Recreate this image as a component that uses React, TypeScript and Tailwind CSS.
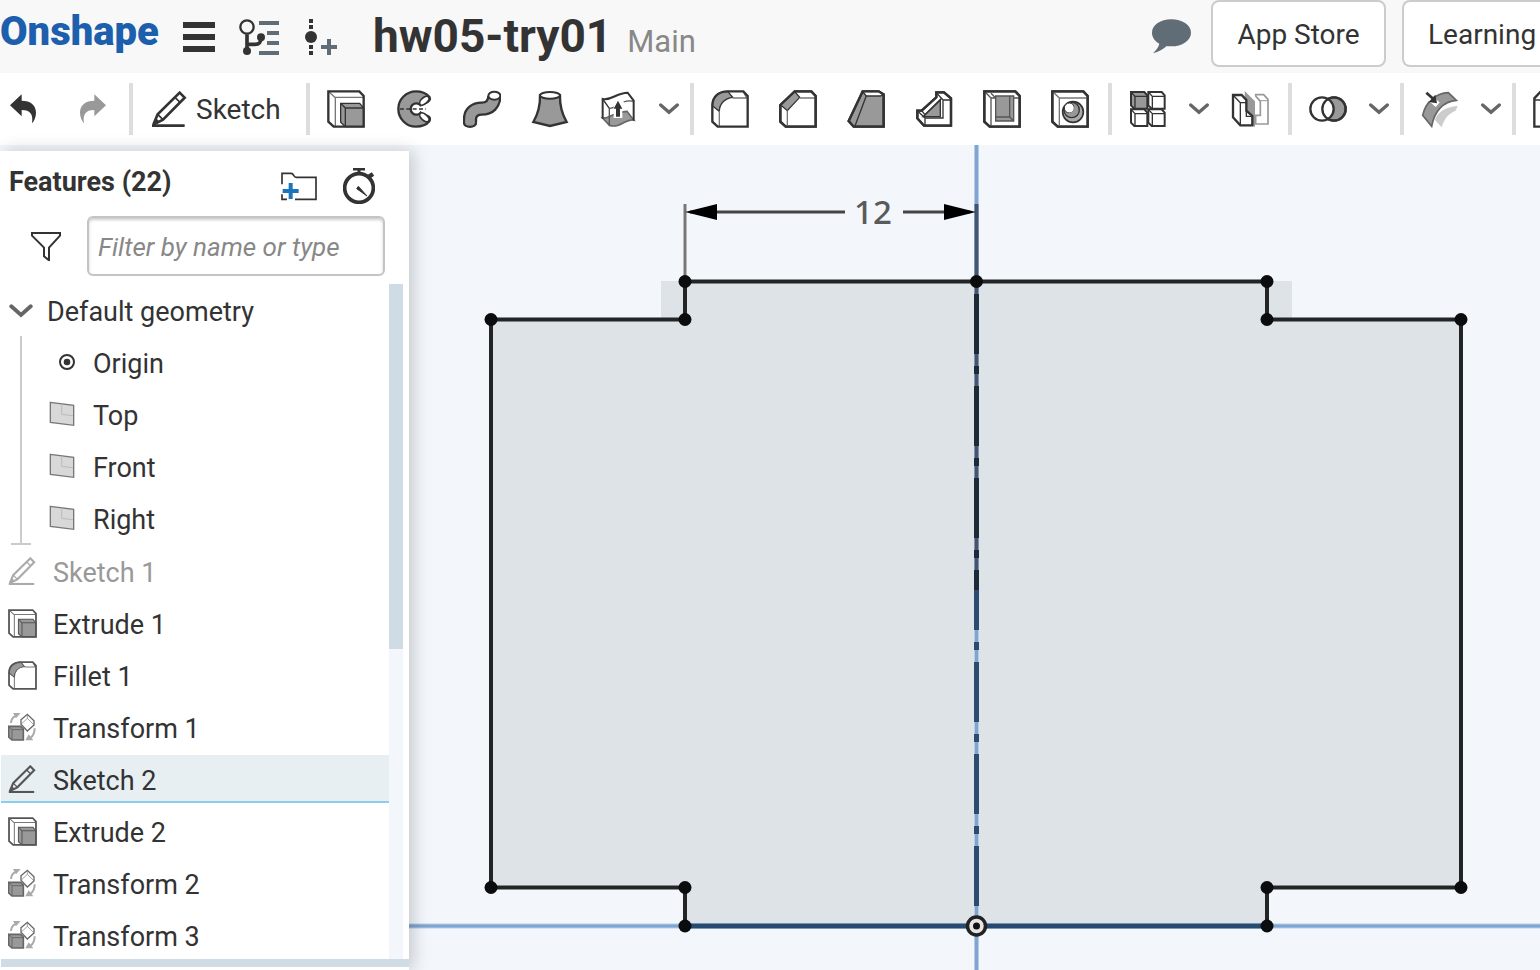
import type { ReactNode } from "react";

const INK = "#333333";
const MID = "#999999";

function Icon({ children, className = "size-[38px]", box = "0 0 114 114" }: { children: ReactNode; className?: string; box?: string }) {
  return (
    <svg viewBox={box} className={`shrink-0 ${className}`} fill="none" stroke={INK} strokeWidth={7} aria-hidden="true">
      {children}
    </svg>
  );
}

const block = "M4 4H97L110 18V110H20L4 95Z";

const Pencil = ({ className = "size-[36px]", color = INK, width = 8 }: { className?: string; color?: string; width?: number }) => (
  <Icon className={className} box="0 0 108 108">
    <g stroke={color} strokeWidth={width}>
      <path d="M7 101L20 70L86 5L101 20L36 86L7 101" />
      <path d="M20 70L36 86M72 19L87 34" strokeWidth={5} />
      <path d="M4 104L14 80L27 93Z" fill={color} stroke="none" />
      <path d="M3 104H101" />
    </g>
  </Icon>
);

const Extrude = ({ className, color = INK }: { className?: string; color?: string }) => (
  <Icon className={className}>
    <path d={block} fill="#fff" stroke="none" />
    <path d="M4 4L25 23M25 22V108M25 22H108" stroke="#777" strokeWidth={4} />
    <path d="M41 40H98L110 54V110H55L41 97Z" fill={MID} stroke={color} strokeWidth={4} />
    <path d="M41 40L55 54H110M55 54V110" stroke={color} strokeWidth={4} />
    <path d={block} stroke={color} />
  </Icon>
);

const Revolve = () => (
  <Icon>
    <path d="M103 20C93 9 80 4 63 4A53 53 0 0 0 63 110C80 110 94 105 103 94C108 84 102 76 88 76L77 68A17 17 0 1 1 77 46L88 40C102 37 108 28 103 20Z" fill={MID} />
    <ellipse cx="88" cy="32" rx="17" ry="9" transform="rotate(-42 88 32)" fill="#fff" strokeWidth={5} />
    <ellipse cx="88" cy="82" rx="17" ry="9" transform="rotate(42 88 82)" fill="#fff" strokeWidth={5} />
    <path d="M15 57H93" strokeDasharray="12 7" strokeWidth={5} />
  </Icon>
);

const Sweep = () => (
  <Icon>
    <path d="M21 96V88C21 66 36 56 56 56C80 56 94 42 94 18" strokeWidth={43} />
    <ellipse cx="21" cy="99" rx="21.5" ry="15" fill={INK} stroke="none" />
    <path d="M21 99V88C21 66 36 56 56 56C80 56 94 42 94 18" stroke={MID} strokeWidth={29} />
    <ellipse cx="21" cy="98" rx="14.5" ry="9" fill={MID} stroke="none" />
    <ellipse cx="94" cy="17" rx="18" ry="12" fill="#fff" strokeWidth={6} />
  </Icon>
);

const Loft = () => (
  <Icon>
    <path d="M27 16C28 50 20 74 7 96L57 108L107 96C94 74 86 50 87 16Z" fill={MID} />
    <ellipse cx="57" cy="16" rx="30" ry="10" fill="#fff" strokeWidth={6} />
  </Icon>
);

const Thicken = () => (
  <Icon>
    <path d="M11 27C40 32 52 8 86 8L104 32V90C80 84 66 116 31 106L11 84Z" fill="#fff" stroke="none" />
    <path d="M11 84C30 88 42 66 84 64L104 90C80 84 66 116 31 106Z" fill={MID} stroke="#666" strokeWidth={5} />
    <path d="M31 55V106M31 55C44 56 52 44 62 38M74 36C84 32 94 32 104 34" stroke="#555" strokeWidth={4} />
    <path d="M11 27L31 55" strokeWidth={4} />
    <path d="M57 30V84" stroke="#fff" strokeWidth={26} />
    <path d="M57 32L44 56H51V80H63V56H70Z" fill={INK} stroke="none" />
    <path d="M11 86V27C40 32 52 8 86 8L104 32V92" strokeWidth={6} />
  </Icon>
);

const Fillet = ({ className, color = INK }: { className?: string; color?: string }) => (
  <Icon className={className}>
    <path d="M4 47C4 18 25 4 50 4H97L110 18V110H20L4 95Z" fill="#fff" stroke="none" />
    <path d="M4 47C4 18 25 4 50 4L65 22C42 25 25 40 25 64Z" fill={MID} stroke={color} strokeWidth={4} />
    <path d="M25 108V62M65 24H108M97 4L106 22" stroke="#777" strokeWidth={4} />
    <path d="M4 47C4 18 25 4 50 4H97L110 18V110H20L4 95Z" stroke={color} />
  </Icon>
);

const Chamfer = () => (
  <Icon>
    <path d="M4 45L47 4H97L110 18V110H20L4 95Z" fill="#fff" />
    <path d="M5 45L47 5L62 22L25 62Z" fill={MID} strokeWidth={4} />
    <path d="M25 108V62M62 24H108" stroke="#777" strokeWidth={4} />
    <path d="M4 45L47 4H97L110 18V110H20L4 95Z" />
  </Icon>
);

const Draft = () => (
  <Icon>
    <path d="M47 4H95L110 13V110H20L5 93Z" fill={MID} />
    <path d="M47 5H95L108 14L100 18H58Z" fill="#fff" strokeWidth={4} />
    <path d="M58 17L24 108" strokeWidth={4} />
    <path d="M47 4H95L110 13V110H20L5 93Z" />
  </Icon>
);

const Rib = () => (
  <Icon>
    <path d="M64 7H87L108 25V107H27L7 85V62H20L64 22Z" fill="#fff" />
    <path d="M24 80L76 30V80Z" fill={MID} strokeWidth={4} />
    <path d="M64 8L84 30H108M84 30V84H30V105M7 62L30 84M20 62L30 74L78 26" strokeWidth={4} />
    <path d="M64 7H87L108 25V107H27L7 85V62H20L64 22Z" />
  </Icon>
);

const Shell = () => (
  <Icon>
    <path d={block} fill="#fff" />
    <path d="M38 18H92V93H38Z" fill={MID} stroke="#555" strokeWidth={4} />
    <path d="M38 81H80L92 93M80 81V18M4 4L24 24V108M24 24H38M92 24H108M24 10L38 24" stroke="#555" strokeWidth={4} />
    <path d={block} />
  </Icon>
);

const Hole = () => (
  <Icon>
    <path d={block} fill="#fff" />
    <path d="M4 4L25 24H108M25 24V108" stroke="#777" strokeWidth={4} />
    <circle cx="66" cy="66" r="31" fill="#aaa" strokeWidth={5} />
    <circle cx="62" cy="60" r="23" fill={MID} strokeWidth={4} />
    <circle cx="55" cy="54" r="15" fill="#fff" strokeWidth={3} />
    <path d="M70 46A17 17 0 0 1 46 69C62 72 72 60 70 46Z" fill={MID} stroke="none" />
    <path d={block} />
  </Icon>
);

const Pattern = () => (
  <Icon>
    {[[6, 6], [58, 6], [6, 58], [58, 58]].map(([x, y], i) => (
      <g key={i} transform={`translate(${x} ${y})`}>
        <path d="M0 0H40L49 10V50H10L0 40Z" fill={i === 0 ? MID : "#fff"} strokeWidth={6} />
        <path d="M0 0L12 13H48M12 13V50" strokeWidth={4} />
      </g>
    ))}
  </Icon>
);

const Mirror = () => (
  <Icon>
    <path d="M41 3L72 34V112L41 80Z" fill={MID} stroke="none" />
    <path d="M74 14H98L111 28V102H74V76H88V34L74 18Z" fill="#fff" stroke="#999" strokeWidth={5} />
    <path d="M98 14L111 28M76 20L88 32H111" stroke="#999" strokeWidth={3} />
    <path d="M6 15H32L46 30V62L64 78V106H28L6 82Z" fill="#fff" />
    <path d="M6 15L28 38V103M28 38H46M46 60V79H64" strokeWidth={4} />
  </Icon>
);

const BooleanOp = () => (
  <Icon>
    <circle cx="75" cy="57" r="35" fill={MID} />
    <circle cx="39" cy="57" r="35" fill="#fff" />
    <circle cx="75" cy="57" r="35" />
  </Icon>
);

const ModifyFace = () => (
  <Icon>
    <path d="M42 90C48 68 74 50 110 48L104 62C86 68 70 84 62 112Z" fill="#ccc" stroke="none" />
    <path d="M5 76C14 36 44 10 82 8L106 31C68 34 40 62 32 109Z" fill={MID} stroke="#666" strokeWidth={5} />
    <path d="M10 8L50 44" stroke="#fff" strokeWidth={18} />
    <path d="M16 8L38 28" strokeWidth={8} />
    <path d="M48 40L23 36L43 14Z" fill={INK} stroke="none" />
  </Icon>
);

const NextTool = () => (
  <Icon>
    <path d="M4 110V25L22 6H110V110Z" fill="#fff" />
    <path d="M4 30H80L108 8M80 30V108" strokeWidth={4} />
  </Icon>
);

const Undo = ({ flip = false }: { flip?: boolean }) => (
  <Icon className="h-[30px] w-[26px]" box="0 0 78 90">
    <path
      transform={flip ? "translate(78 0) scale(-1 1)" : undefined}
      d="M0 34L35 1V20C62 20 78 34 78 56C78 70 72 82 66 88C70 62 62 48 35 48V67Z"
      fill={flip ? MID : INK}
      stroke="none"
    />
  </Icon>
);

const Chevron = ({ className = "h-3 w-5" }: { className?: string }) => (
  <Icon className={className} box="0 0 60 36">
    <path d="M5 6L30 28L55 6" stroke="#666" strokeWidth={10} strokeLinecap="round" />
  </Icon>
);

const Transform = () => (
  <Icon className="size-[28px]" box="0 0 84 84">
    <path d="M2 40H38L46 48V81H12L2 72Z" fill={MID} stroke="#666" strokeWidth={5} />
    <path d="M2 40L12 50H46M12 50V81" stroke="#666" strokeWidth={3} />
    <path d="M39 20L58 4L78 23V36L58 54L39 34Z" fill="#fff" stroke="#666" strokeWidth={4} />
    <path d="M39 34L58 16L78 36M58 4V16" stroke="#777" strokeWidth={2} />
    <path d="M9 30C10 16 16 11 24 9" stroke="#aaa" strokeWidth={6} />
    <path d="M15 0H38L24 16Z" fill="#aaa" stroke="none" />
    <path d="M80 46C80 60 76 68 68 74" stroke="#aaa" strokeWidth={6} />
    <path d="M52 82L62 64L76 82Z" fill="#aaa" stroke="none" />
  </Icon>
);

const Plane = () => (
  <Icon className="size-[26px]" box="0 0 78 78">
    <path d="M4 4L74 13V73L4 64Z" fill="#d8d8d8" stroke="#777" strokeWidth={4} />
    <path d="M38 9V40L72 44" stroke="#bbb" strokeWidth={3} />
  </Icon>
);

const OriginMark = () => (
  <Icon className="size-4" box="0 0 48 48">
    <circle cx="24" cy="24" r="21" strokeWidth={6} />
    <circle cx="24" cy="24" r="10" fill={INK} stroke="none" />
  </Icon>
);

function Tool({ label, children }: { label: string; children: ReactNode }) {
  return (
    <button type="button" aria-label={label} className="flex h-full w-[68px] shrink-0 items-center justify-center">
      {children}
    </button>
  );
}

function More({ label }: { label: string }) {
  return (
    <button type="button" aria-label={label} className="flex h-full w-[34px] shrink-0 items-center justify-center">
      <Chevron />
    </button>
  );
}

const Divider = () => <span className="mr-[2px] ml-1 h-[52px] w-1 shrink-0 bg-[#dddddd]" />;

function Header() {
  return (
    <header className="flex h-[73px] shrink-0 items-center overflow-hidden bg-[#f8f8f8]">
      <a href="#home" className="w-[183px] shrink-0 pb-[10px] text-[40px] leading-none font-black text-[#1c5fad]">
        Onshape
      </a>
      <button type="button" aria-label="Menu" className="flex w-8 shrink-0 flex-col gap-[6px]">
        <span className="h-[6px] bg-[#333]" />
        <span className="h-[6px] bg-[#333]" />
        <span className="h-[6px] bg-[#333]" />
      </button>
      <button type="button" aria-label="Versions and history" className="ml-6 shrink-0">
        <Icon className="h-9 w-10" box="0 0 120 108">
          <circle cx="24" cy="24" r="20" />
          <path d="M24 46V96M24 76H48C62 76 66 70 66 56" strokeWidth={11} />
          <circle cx="24" cy="96" r="12" fill={INK} stroke="none" />
          <circle cx="66" cy="55" r="12" fill={INK} stroke="none" />
          <path d="M60 12H120M84 42H120M84 72H120M60 102H120" stroke="#616d76" strokeWidth={12} />
        </Icon>
      </button>
      <button type="button" aria-label="Create version" className="ml-[26px] shrink-0">
        <Icon className="h-9 w-8" box="0 0 96 108">
          <path d="M18 0V36M18 78V108" strokeWidth={12} strokeDasharray="12 6" />
          <circle cx="18" cy="54" r="18" fill={INK} stroke="none" />
          <path d="M72 60V108M48 84H96" stroke="#616d76" strokeWidth={12} />
        </Icon>
      </button>
      <div className="flex flex-1 items-baseline gap-[15px] pb-[2px] pl-9 whitespace-nowrap">
        <h1 className="text-[46px] leading-[72px] font-bold text-[#333]">hw05-try01</h1>
        <span className="text-[31px] text-[#888]">Main</span>
      </div>
      <button type="button" aria-label="Comments" className="mr-5 shrink-0">
        <Icon className="h-[35px] w-[39px]" box="0 0 117 105">
          <path d="M58 1C90 1 117 18 117 41C117 65 90 82 58 82C52 82 48 82 44 81C34 90 20 98 3 103C12 94 20 84 22 74C8 66 0 55 0 41C0 18 26 1 58 1Z" fill="#616d76" stroke="none" />
        </Icon>
      </button>
      <button type="button" className="mb-[6px] h-[67px] w-[175px] shrink-0 rounded-lg border-2 border-[#ccc] bg-white pt-[2px] text-[28px] text-[#333]">
        App Store
      </button>
      <button type="button" className="mb-[6px] ml-4 h-[67px] w-[138px] shrink-0 rounded-l-lg border-2 border-r-0 border-[#ccc] bg-white pt-[2px] pl-6 text-left text-[28px] text-[#333]">
        Learning
      </button>
    </header>
  );
}

function Toolbar() {
  return (
    <div role="toolbar" aria-label="Part tools" className="flex h-[72px] shrink-0 items-center overflow-hidden bg-white">
      <button type="button" aria-label="Undo" className="ml-[10px] shrink-0"><Undo /></button>
      <button type="button" aria-label="Redo" className="mr-[19px] ml-11 shrink-0"><Undo flip /></button>
      <Divider />
      <button type="button" className="flex h-full w-[167px] shrink-0 items-center gap-[9px] pl-4 text-[28px] text-[#333]">
        <Pencil />
        <span className="pt-[2px]">Sketch</span>
      </button>
      <Divider />
      <Tool label="Extrude"><Extrude /></Tool>
      <Tool label="Revolve"><Revolve /></Tool>
      <Tool label="Sweep"><Sweep /></Tool>
      <Tool label="Loft"><Loft /></Tool>
      <Tool label="Thicken"><Thicken /></Tool>
      <More label="More solid tools" />
      <Divider />
      <Tool label="Fillet"><Fillet /></Tool>
      <Tool label="Chamfer"><Chamfer /></Tool>
      <Tool label="Draft"><Draft /></Tool>
      <Tool label="Rib"><Rib /></Tool>
      <Tool label="Shell"><Shell /></Tool>
      <Tool label="Hole"><Hole /></Tool>
      <Divider />
      <Tool label="Linear pattern"><Pattern /></Tool>
      <More label="More pattern tools" />
      <Tool label="Mirror"><Mirror /></Tool>
      <Divider />
      <Tool label="Boolean"><BooleanOp /></Tool>
      <More label="More boolean tools" />
      <Divider />
      <Tool label="Move face"><ModifyFace /></Tool>
      <More label="More face tools" />
      <Divider />
      <Tool label="Plane"><NextTool /></Tool>
    </div>
  );
}

type Kind = "sketch" | "extrude" | "fillet" | "transform";

const features: { name: string; kind: Kind; state?: "hidden" | "selected" }[] = [
  { name: "Sketch 1", kind: "sketch", state: "hidden" },
  { name: "Extrude 1", kind: "extrude" },
  { name: "Fillet 1", kind: "fillet" },
  { name: "Transform 1", kind: "transform" },
  { name: "Sketch 2", kind: "sketch", state: "selected" },
  { name: "Extrude 2", kind: "extrude" },
  { name: "Transform 2", kind: "transform" },
  { name: "Transform 3", kind: "transform" },
];

function FeatureIcon({ kind, faded }: { kind: Kind; faded: boolean }) {
  if (kind === "sketch") return <Pencil className="size-[28px]" color={faded ? "#aaaaaa" : "#555555"} width={8} />;
  if (kind === "extrude") return <Extrude className="size-[29px]" color="#555555" />;
  if (kind === "fillet") return <Fillet className="size-[29px]" color="#555555" />;
  return <Transform />;
}

function FeaturePanel() {
  return (
    <aside className="z-10 mt-[6px] flex w-[409px] shrink-0 flex-col bg-white shadow-[4px_0_16px_rgba(0,0,0,0.2)]">
      <div className="flex h-[65px] shrink-0 items-center pr-[34px] pl-[9px]">
        <h2 className="flex-1 pb-[2px] text-[27px] font-bold text-[#333]">Features (22)</h2>
        <button type="button" aria-label="Add folder" className="mt-1">
          <Icon className="h-[30px] w-9" box="0 0 108 90">
            <path d="M3 40V7H30C40 7 36 19 46 19H105V85H42M3 70V85H18" strokeWidth={5} />
            <path d="M29 36V84M5 60H53" stroke="#1b75bb" strokeWidth={12} />
          </Icon>
        </button>
        <button type="button" aria-label="Rebuild times" className="mt-1 ml-[26px]">
          <Icon className="h-9 w-8" box="0 0 96 108">
            <circle cx="48" cy="60" r="43" strokeWidth={11} />
            <path d="M30 3H66M48 3V18" strokeWidth={9} />
            <path d="M78 26L90 18" strokeWidth={13} />
            <path d="M46 55L72 84L41 62Z" fill={INK} strokeWidth={3} />
          </Icon>
        </button>
      </div>
      <div className="flex shrink-0 items-center gap-[26px] pr-6 pl-[31px]">
        <button type="button" aria-label="Filter options">
          <Icon className="size-[30px]" box="0 0 90 90">
            <path d="M3 6H87V14L54 50V88L39 76V50L3 14Z" strokeWidth={6} />
          </Icon>
        </button>
        <input
          type="text"
          aria-label="Filter by name or type"
          placeholder="Filter by name or type"
          className="h-[60px] min-w-0 flex-1 rounded-md border-2 border-[#c4c4c4] bg-white px-[9px] pt-[2px] text-[26px] text-[#333] italic shadow-[inset_0_2px_3px_rgba(0,0,0,0.2)] placeholder:text-[#888]"
        />
      </div>
      <div className="mt-2 flex min-h-0 flex-1 pr-[6px]">
        <div className="h-[675px] flex-1 overflow-hidden pt-[2px] pl-px text-[27px] leading-[44px] text-[#333]">
          <button type="button" aria-expanded="true" className="mb-[2px] flex h-12 w-full items-center gap-[14px] pt-1 pl-2">
            <Chevron className="mb-[2px] h-[14px] w-6" />
            Default geometry
          </button>
          <div className="flex">
            <div className="ml-[10px] flex h-[209px] w-5 flex-col items-center border-b-2 border-[#c8cccc]">
              <span className="w-[2px] flex-1 bg-[#c8cccc]" />
            </div>
            <ul className="pt-[2px] pl-[18px]">
              {["Origin", "Top", "Front", "Right"].map((name) => (
                <li key={name} className="mb-1 flex h-12 items-center gap-[18px] pt-1">
                  <span className={name === "Origin" ? "flex w-[26px] justify-end pb-1" : "flex w-[26px] pb-1"}>
                    {name === "Origin" ? <OriginMark /> : <Plane />}
                  </span>
                  {name}
                </li>
              ))}
            </ul>
          </div>
          <ul className="pt-px">
            {features.map(({ name, kind, state }) => (
              <li
                key={name}
                className={
                  state === "selected"
                    ? "mb-1 flex h-12 items-center bg-[#e8eff3] pt-1 pl-[7px] shadow-[inset_0_-2px_0_#8bcdf2]"
                    : state === "hidden"
                      ? "mb-1 flex h-12 items-center pt-1 pl-[7px] text-[#999]"
                      : "mb-1 flex h-12 items-center pt-1 pl-[7px]"
                }
              >
                <span className="flex w-[45px] pb-1">
                  <FeatureIcon kind={kind} faded={state === "hidden"} />
                </span>
                {name}
              </li>
            ))}
          </ul>
        </div>
        <div className="w-[14px] shrink-0 bg-[#f3f7fb]">
          <div className="h-[54%] bg-[#cfdbe5]" />
        </div>
      </div>
      <div className="mb-[3px] ml-px h-2 shrink-0 bg-[#cfdbe5]" />
    </aside>
  );
}

const profile =
  "M685 281.5H1267V319.5H1461V887.5H1267V926H685V887.5H491V319.5H685Z";

const vertices = [
  [685, 281.5], [976.5, 281.5], [1267, 281.5], [685, 319.5], [1267, 319.5], [491, 319.5], [1461, 319.5],
  [491, 887.5], [685, 887.5], [1267, 887.5], [1461, 887.5], [685, 926], [1267, 926],
];

function SketchView() {
  return (
    <svg viewBox="409 145 1131 825" preserveAspectRatio="xMinYMin meet" className="min-w-0 flex-1" role="img" aria-label="Sketch 2 profile">
      <path d="M661 281H1292V319H1461V888H1267V926H685V888H491V319H661Z" fill="#dee3e7" />
      <path d="M409 926H1540M976.5 145V970" stroke="#b7cde6" strokeWidth="5" />
      <path d="M409 926H1540M976.5 145V970" stroke="#7fa5d2" strokeWidth="3" />
      <path d="M976.5 204V590" stroke="#43566e" strokeWidth="4" />
      <path d="M976.5 294V926" stroke="#2b4b70" strokeWidth="5" strokeDasharray="60 12 8 12" />
      <path d="M976.5 294V590" stroke="#1c2b38" strokeWidth="5" strokeDasharray="60 12 8 12" />
      <path d={profile} fill="none" stroke="#222426" strokeWidth="4" />
      <path d="M687 926H1265" stroke="#274a73" strokeWidth="5" />
      <path d="M685 204V281" stroke="#777" strokeWidth="3" />
      <path d="M690 212H845M903 212H970" stroke="#444" strokeWidth="3" />
      <path d="M685 212L717 204V220ZM976 212L944 204V220Z" fill="#000" />
      {vertices.map(([x, y]) => (
        <circle key={`${x}-${y}`} cx={x} cy={y} r="6.5" fill="#0b0c0d" />
      ))}
      <circle cx="976.5" cy="926" r="9" fill="#e5e5e5" stroke="#222" strokeWidth="3.5" />
      <circle cx="976.5" cy="926" r="3.5" fill="#111" />
      <text x="873" y="224" textAnchor="middle" fill="#5a5a5a" className="font-['Noto_Sans',sans-serif] text-[33px] font-medium">
        12
      </text>
    </svg>
  );
}

export default function App() {
  return (
    <div className="flex min-h-screen flex-col overflow-hidden bg-[#f3f7fb] font-[Roboto,sans-serif]">
      <Header />
      <Toolbar />
      <main className="flex flex-1">
        <FeaturePanel />
        <SketchView />
      </main>
    </div>
  );
}
